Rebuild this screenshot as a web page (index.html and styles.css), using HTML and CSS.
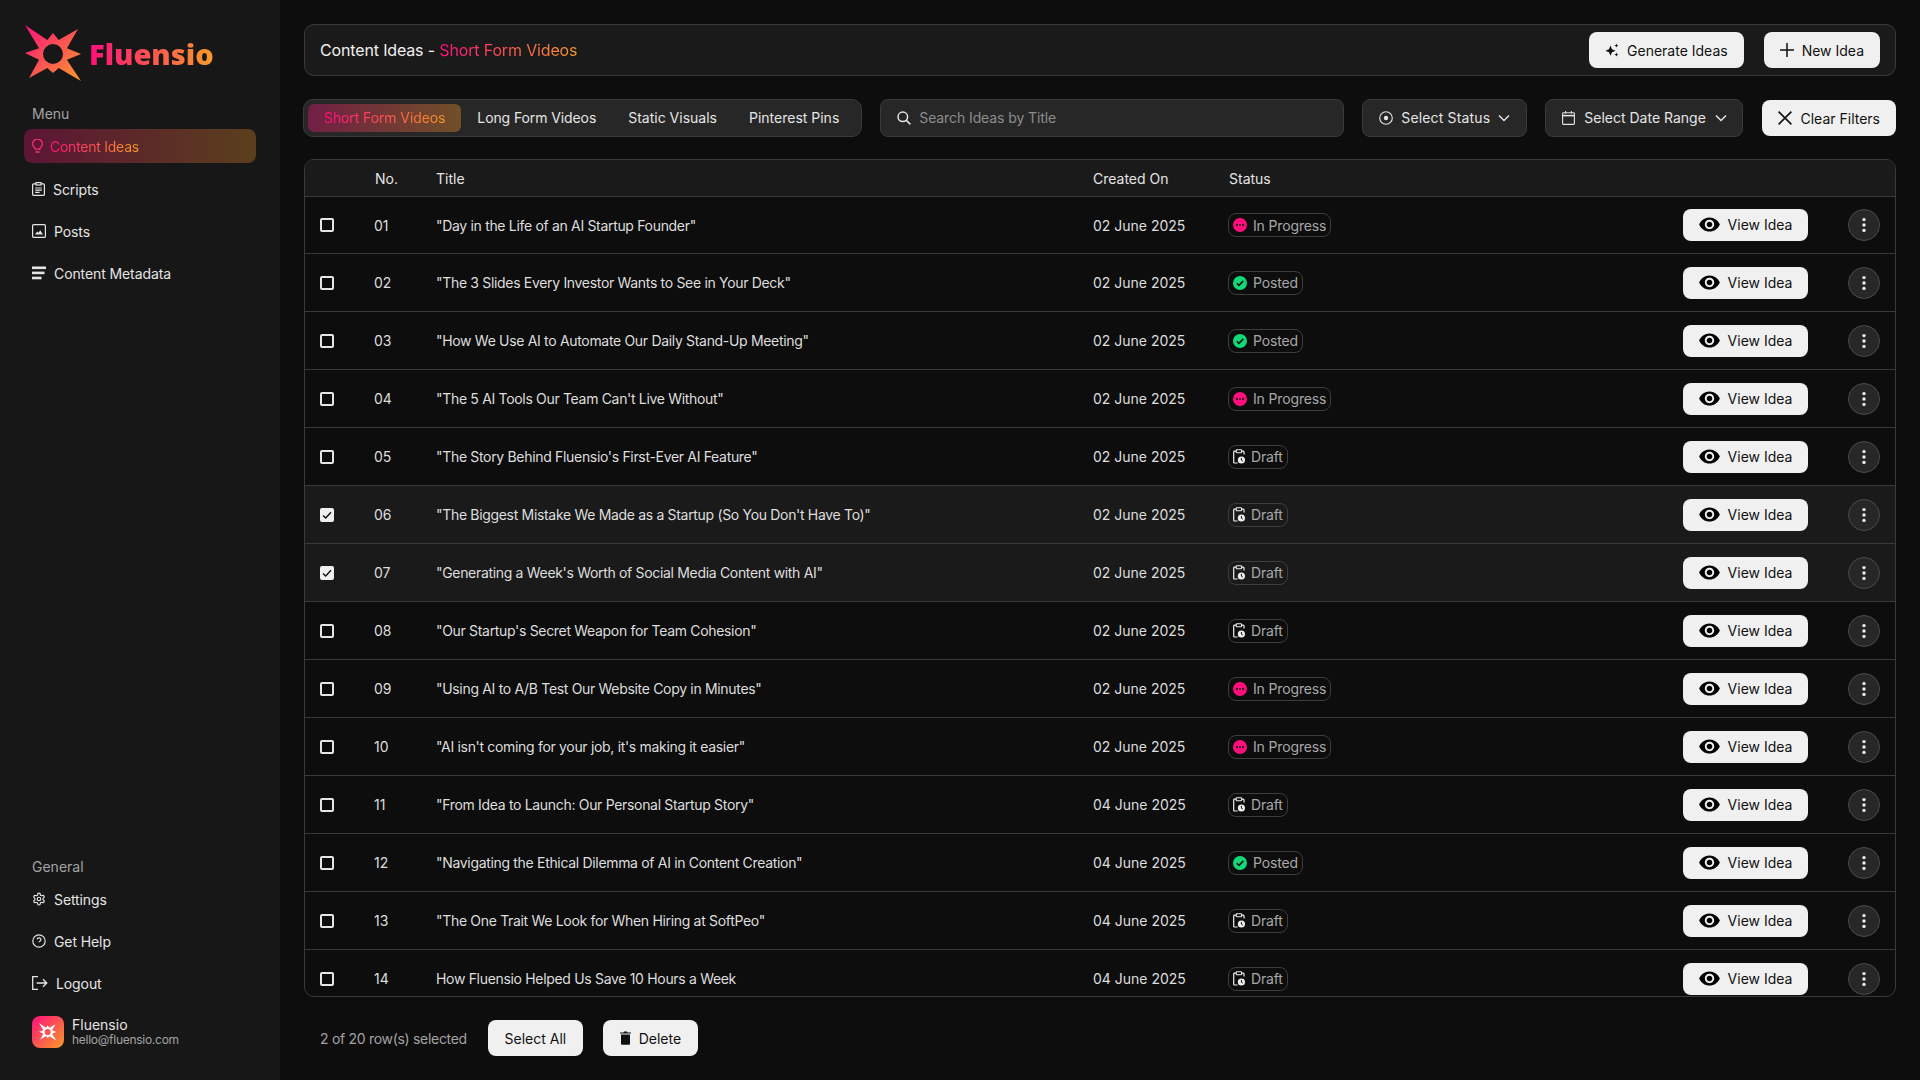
FILE: index.html
```html
<!DOCTYPE html>
<html lang="en">
<head>
<meta charset="utf-8">
<title>Fluensio - Content Ideas</title>
<link rel="stylesheet" href="styles.css">
</head>
<body>
<svg class="defs" aria-hidden="true">
  <defs>
    <linearGradient id="brand" gradientUnits="userSpaceOnUse" x1="25" y1="25" x2="81" y2="81">
      <stop offset="0" stop-color="#ff0f7b"/><stop offset="1" stop-color="#f89b29"/>
    </linearGradient>
    <symbol id="i-star" viewBox="25 25 58 58">
      <path fill-rule="evenodd" d="M53 33 58.7 40.1 78 29 66.9 48.3 81 54 66.9 59.7 81 81 58.7 67.9 53 73 47.3 67.9 29 78 39.1 59.7 25 53 39.1 48.3 25 25 47.3 40.1ZM53 44a10 10 0 1 0 0 20 10 10 0 0 0 0-20Z"/>
    </symbol>
    <symbol id="i-eye" viewBox="1 4 22 16"><path d="M12 4.5C7 4.5 2.73 7.61 1 12c1.73 4.39 6 7.5 11 7.5s9.27-3.11 11-7.5c-1.73-4.39-6-7.5-11-7.5zM12 17c-2.76 0-5-2.24-5-5s2.24-5 5-5 5 2.24 5 5-2.24 5-5 5zm0-8c-1.66 0-3 1.34-3 3s1.34 3 3 3 3-1.34 3-3-1.34-3-3-3z"/></symbol>
    <symbol id="i-dots" viewBox="0 0 16 16"><circle cx="8" cy="2.6" r="1.7"/><circle cx="8" cy="8" r="1.7"/><circle cx="8" cy="13.4" r="1.7"/></symbol>
    <symbol id="i-progress" viewBox="0 0 14 14"><circle cx="7" cy="7" r="7" fill="#ff0f7b"/><circle cx="4" cy="7" r="1" fill="#111"/><circle cx="7" cy="7" r="1" fill="#111"/><circle cx="10" cy="7" r="1" fill="#111"/></symbol>
    <symbol id="i-posted" viewBox="0 0 14 14"><circle cx="7" cy="7" r="7" fill="#12d877"/><path d="M3.8 7.2 6 9.4l4.3-4.5" fill="none" stroke="#111" stroke-width="1.6"/></symbol>
    <symbol id="i-draft" viewBox="0 0 12 15"><path d="M3 2.2H1.4a.7.7 0 0 0-.7.7v10.4a.7.7 0 0 0 .7.7h3.2M9 2.2h1.3a.7.7 0 0 1 .7.7v2.6" fill="none" stroke="#eee" stroke-width="1.2"/><rect x="3.2" y=".8" width="5.4" height="3" rx=".8" fill="none" stroke="#eee" stroke-width="1.1"/><circle cx="8.4" cy="11" r="3.6" fill="#eee"/><path d="M8.4 9v2.2l1.4.8" fill="none" stroke="#111" stroke-width="1"/></symbol>
  </defs>
</svg>

<div class="app">
  <aside class="sidebar">
    <div class="brand">
      <svg class="brand-mark" width="58" height="58"><use href="#i-star" fill="url(#brand)"/></svg>
      <span class="brand-name">Fluensio</span>
    </div>
    <div class="nav-label">Menu</div>
    <nav class="nav">
      <a class="nav-item active">
        <svg width="11" height="14" viewBox="0 0 11 14" fill="none" stroke="#ff2f70" stroke-width="1.2"><path d="M3.4 10.2c0-1.4-2.8-2.4-2.8-5.2a4.9 4.9 0 0 1 9.8 0c0 2.8-2.8 3.8-2.8 5.2Z"/><path d="M3.4 13h4.2" stroke="#ff5060"/></svg>
        <span class="grad-text">Content Ideas</span>
      </a>
      <a class="nav-item">
        <svg width="13" height="14" viewBox="0 0 13 14" fill="none" stroke="#e5e5e5" stroke-width="1.2"><rect x=".6" y="1.8" width="11.8" height="11.6" rx="1"/><rect x="4" y=".6" width="5" height="2.4" fill="#171717"/><path d="M3.2 6h6.6M3.2 8.2h6.6M3.2 10.4h4.4"/></svg>
        <span>Scripts</span>
      </a>
      <a class="nav-item">
        <svg width="14" height="14" viewBox="0 0 14 14"><rect x=".6" y=".6" width="12.8" height="12.8" rx="1" fill="none" stroke="#e5e5e5" stroke-width="1.2"/><path d="M3 10.6 5.2 7.4l1.3 1.3 1.7-2.5 2.8 4.4Z" fill="#e5e5e5"/></svg>
        <span>Posts</span>
      </a>
      <a class="nav-item">
        <svg width="14" height="14" viewBox="0 0 14 14" fill="#e5e5e5"><rect y=".5" width="14" height="2.6"/><rect y="5.6" width="12.5" height="2.6"/><rect y="10.7" width="9.5" height="2.6"/></svg>
        <span>Content Metadata</span>
      </a>
    </nav>
    <div class="side-bottom">
      <div class="nav-label">General</div>
      <nav class="nav">
        <a class="nav-item">
          <svg width="14" height="14" viewBox="0 0 24 24" fill="none" stroke="#e5e5e5" stroke-width="2"><path d="M12.22 2h-.44a2 2 0 0 0-2 2v.18a2 2 0 0 1-1 1.73l-.43.25a2 2 0 0 1-2 0l-.15-.08a2 2 0 0 0-2.73.73l-.22.38a2 2 0 0 0 .73 2.73l.15.1a2 2 0 0 1 1 1.72v.51a2 2 0 0 1-1 1.74l-.15.09a2 2 0 0 0-.73 2.73l.22.38a2 2 0 0 0 2.73.73l.15-.08a2 2 0 0 1 2 0l.43.25a2 2 0 0 1 1 1.73V20a2 2 0 0 0 2 2h.44a2 2 0 0 0 2-2v-.18a2 2 0 0 1 1-1.73l.43-.25a2 2 0 0 1 2 0l.15.08a2 2 0 0 0 2.73-.73l.22-.39a2 2 0 0 0-.73-2.73l-.15-.08a2 2 0 0 1-1-1.74v-.5a2 2 0 0 1 1-1.74l.15-.09a2 2 0 0 0 .73-2.73l-.22-.38a2 2 0 0 0-2.73-.73l-.15.08a2 2 0 0 1-2 0l-.43-.25a2 2 0 0 1-1-1.73V4a2 2 0 0 0-2-2z"/><circle cx="12" cy="12" r="3"/></svg>
          <span>Settings</span>
        </a>
        <a class="nav-item">
          <svg width="14" height="14" viewBox="0 0 24 24" fill="none" stroke="#e5e5e5" stroke-width="2"><circle cx="12" cy="12" r="10.6"/><path d="M8.6 9a3.5 3.5 0 0 1 6.8 1c0 2.2-3.4 2.6-3.4 4.2"/><path d="M12 17.5v.2"/></svg>
          <span>Get Help</span>
        </a>
        <a class="nav-item">
          <svg width="16" height="14" viewBox="0 0 16 14" fill="none" stroke="#e5e5e5" stroke-width="1.3"><path d="M6 .7H.7v12.6H6"/><path d="M4.6 7h10.2M11 3.2 14.8 7 11 10.8"/></svg>
          <span>Logout</span>
        </a>
      </nav>
      <div class="user">
        <div class="avatar"><svg width="18" height="18"><use href="#i-star" fill="#fff"/></svg></div>
        <div class="user-info">
          <div class="user-name">Fluensio</div>
          <div class="user-mail">hello@fluensio.com</div>
        </div>
      </div>
    </div>
  </aside>

  <main class="main">
    <header class="topbar">
      <h1 class="page-title">Content Ideas - <span class="grad-text">Short Form Videos</span></h1>
      <div class="top-actions">
        <button class="btn"><svg width="14" height="14" viewBox="0 0 14 14" fill="#111"><path d="M5.5 2.6 7 6.2l3.6 1.5L7 9.2l-1.5 3.6L4 9.2.4 7.7 4 6.2ZM11.4.6l.6 1.4 1.4.6-1.4.6-.6 1.4-.6-1.4-1.4-.6 1.4-.6ZM11.4 9.6l.6 1.4 1.4.6-1.4.6-.6 1.4-.6-1.4-1.4-.6 1.4-.6Z"/></svg>Generate Ideas</button>
        <button class="btn"><svg width="14" height="14" viewBox="0 0 14 14" fill="none" stroke="#111" stroke-width="1.5"><path d="M7 0v14M0 7h14"/></svg>New Idea</button>
      </div>
    </header>

    <section class="filters">
      <div class="tabs">
        <button class="tab active"><span class="grad-text">Short Form Videos</span></button>
        <button class="tab">Long Form Videos</button>
        <button class="tab">Static Visuals</button>
        <button class="tab">Pinterest Pins</button>
      </div>
      <div class="search">
        <svg width="14" height="14" viewBox="0 0 14 14" fill="none" stroke="#e5e5e5" stroke-width="1.5"><circle cx="5.8" cy="5.8" r="4.8"/><path d="m9.4 9.4 4 4"/></svg>
        <span>Search Ideas by Title</span>
      </div>
      <button class="select select-status">
        <svg width="14" height="14" viewBox="0 0 14 14" fill="none" stroke="#e5e5e5" stroke-width="1.1"><circle cx="7" cy="7" r="6.3"/><circle cx="7" cy="7" r="2.2" fill="#e5e5e5" stroke="none"/></svg>
        <span>Select Status</span>
        <svg class="chev" width="12" height="8" viewBox="0 0 12 8" fill="none" stroke="#e5e5e5" stroke-width="1.5"><path d="m1 1.5 5 5 5-5"/></svg>
      </button>
      <button class="select select-date">
        <svg width="13" height="14" viewBox="0 0 13 14" fill="none" stroke="#e5e5e5" stroke-width="1.1"><rect x=".6" y="1.8" width="11.8" height="11.6" rx=".8"/><path d="M.6 4.6h11.8" stroke-width="1.6"/><path d="M3.6 0v2.4M9.4 0v2.4"/></svg>
        <span>Select Date Range</span>
        <svg class="chev" width="12" height="8" viewBox="0 0 12 8" fill="none" stroke="#e5e5e5" stroke-width="1.5"><path d="m1 1.5 5 5 5-5"/></svg>
      </button>
      <button class="btn btn-clear"><svg width="14" height="14" viewBox="0 0 14 14" fill="none" stroke="#111" stroke-width="1.6"><path d="m.6.6 12.8 12.8M13.4.6.6 13.4"/></svg>Clear Filters</button>
    </section>

    <section class="table">
      <div class="row head">
        <span></span><span>No.</span><span>Title</span><span>Created On</span><span>Status</span><span></span>
      </div>
      <div class="rows">
        <div class="row"><i class="check"></i><span class="num">01</span><span class="ttl">"Day in the Life of an AI Startup Founder"</span><span>02 June 2025</span><span><b class="pill"><svg width="14" height="14"><use href="#i-progress"/></svg>In Progress</b></span><span class="acts"><button class="btn btn-view"><svg width="21" height="15"><use href="#i-eye"/></svg>View Idea</button><button class="kebab" aria-label="More"><svg width="16" height="16"><use href="#i-dots"/></svg></button></span></div>
        <div class="row"><i class="check"></i><span class="num">02</span><span class="ttl">"The 3 Slides Every Investor Wants to See in Your Deck"</span><span>02 June 2025</span><span><b class="pill"><svg width="14" height="14"><use href="#i-posted"/></svg>Posted</b></span><span class="acts"><button class="btn btn-view"><svg width="21" height="15"><use href="#i-eye"/></svg>View Idea</button><button class="kebab" aria-label="More"><svg width="16" height="16"><use href="#i-dots"/></svg></button></span></div>
        <div class="row"><i class="check"></i><span class="num">03</span><span class="ttl">"How We Use AI to Automate Our Daily Stand-Up Meeting"</span><span>02 June 2025</span><span><b class="pill"><svg width="14" height="14"><use href="#i-posted"/></svg>Posted</b></span><span class="acts"><button class="btn btn-view"><svg width="21" height="15"><use href="#i-eye"/></svg>View Idea</button><button class="kebab" aria-label="More"><svg width="16" height="16"><use href="#i-dots"/></svg></button></span></div>
        <div class="row"><i class="check"></i><span class="num">04</span><span class="ttl">"The 5 AI Tools Our Team Can't Live Without"</span><span>02 June 2025</span><span><b class="pill"><svg width="14" height="14"><use href="#i-progress"/></svg>In Progress</b></span><span class="acts"><button class="btn btn-view"><svg width="21" height="15"><use href="#i-eye"/></svg>View Idea</button><button class="kebab" aria-label="More"><svg width="16" height="16"><use href="#i-dots"/></svg></button></span></div>
        <div class="row"><i class="check"></i><span class="num">05</span><span class="ttl">"The Story Behind Fluensio's First-Ever AI Feature"</span><span>02 June 2025</span><span><b class="pill draft"><svg width="12" height="15"><use href="#i-draft"/></svg>Draft</b></span><span class="acts"><button class="btn btn-view"><svg width="21" height="15"><use href="#i-eye"/></svg>View Idea</button><button class="kebab" aria-label="More"><svg width="16" height="16"><use href="#i-dots"/></svg></button></span></div>
        <div class="row selected"><i class="check on"><svg width="14" height="14" viewBox="0 0 14 14" fill="none" stroke="#111" stroke-width="1.4"><path d="m3 7.4 2.7 2.6L11 4.2"/></svg></i><span class="num">06</span><span class="ttl">"The Biggest Mistake We Made as a Startup (So You Don't Have To)"</span><span>02 June 2025</span><span><b class="pill draft"><svg width="12" height="15"><use href="#i-draft"/></svg>Draft</b></span><span class="acts"><button class="btn btn-view"><svg width="21" height="15"><use href="#i-eye"/></svg>View Idea</button><button class="kebab" aria-label="More"><svg width="16" height="16"><use href="#i-dots"/></svg></button></span></div>
        <div class="row selected"><i class="check on"><svg width="14" height="14" viewBox="0 0 14 14" fill="none" stroke="#111" stroke-width="1.4"><path d="m3 7.4 2.7 2.6L11 4.2"/></svg></i><span class="num">07</span><span class="ttl">"Generating a Week's Worth of Social Media Content with AI"</span><span>02 June 2025</span><span><b class="pill draft"><svg width="12" height="15"><use href="#i-draft"/></svg>Draft</b></span><span class="acts"><button class="btn btn-view"><svg width="21" height="15"><use href="#i-eye"/></svg>View Idea</button><button class="kebab" aria-label="More"><svg width="16" height="16"><use href="#i-dots"/></svg></button></span></div>
        <div class="row"><i class="check"></i><span class="num">08</span><span class="ttl">"Our Startup's Secret Weapon for Team Cohesion"</span><span>02 June 2025</span><span><b class="pill draft"><svg width="12" height="15"><use href="#i-draft"/></svg>Draft</b></span><span class="acts"><button class="btn btn-view"><svg width="21" height="15"><use href="#i-eye"/></svg>View Idea</button><button class="kebab" aria-label="More"><svg width="16" height="16"><use href="#i-dots"/></svg></button></span></div>
        <div class="row"><i class="check"></i><span class="num">09</span><span class="ttl">"Using AI to A/B Test Our Website Copy in Minutes"</span><span>02 June 2025</span><span><b class="pill"><svg width="14" height="14"><use href="#i-progress"/></svg>In Progress</b></span><span class="acts"><button class="btn btn-view"><svg width="21" height="15"><use href="#i-eye"/></svg>View Idea</button><button class="kebab" aria-label="More"><svg width="16" height="16"><use href="#i-dots"/></svg></button></span></div>
        <div class="row"><i class="check"></i><span class="num">10</span><span class="ttl">"AI isn't coming for your job, it's making it easier"</span><span>02 June 2025</span><span><b class="pill"><svg width="14" height="14"><use href="#i-progress"/></svg>In Progress</b></span><span class="acts"><button class="btn btn-view"><svg width="21" height="15"><use href="#i-eye"/></svg>View Idea</button><button class="kebab" aria-label="More"><svg width="16" height="16"><use href="#i-dots"/></svg></button></span></div>
        <div class="row"><i class="check"></i><span class="num">11</span><span class="ttl">"From Idea to Launch: Our Personal Startup Story"</span><span>04 June 2025</span><span><b class="pill draft"><svg width="12" height="15"><use href="#i-draft"/></svg>Draft</b></span><span class="acts"><button class="btn btn-view"><svg width="21" height="15"><use href="#i-eye"/></svg>View Idea</button><button class="kebab" aria-label="More"><svg width="16" height="16"><use href="#i-dots"/></svg></button></span></div>
        <div class="row"><i class="check"></i><span class="num">12</span><span class="ttl">"Navigating the Ethical Dilemma of AI in Content Creation"</span><span>04 June 2025</span><span><b class="pill"><svg width="14" height="14"><use href="#i-posted"/></svg>Posted</b></span><span class="acts"><button class="btn btn-view"><svg width="21" height="15"><use href="#i-eye"/></svg>View Idea</button><button class="kebab" aria-label="More"><svg width="16" height="16"><use href="#i-dots"/></svg></button></span></div>
        <div class="row"><i class="check"></i><span class="num">13</span><span class="ttl">"The One Trait We Look for When Hiring at SoftPeo"</span><span>04 June 2025</span><span><b class="pill draft"><svg width="12" height="15"><use href="#i-draft"/></svg>Draft</b></span><span class="acts"><button class="btn btn-view"><svg width="21" height="15"><use href="#i-eye"/></svg>View Idea</button><button class="kebab" aria-label="More"><svg width="16" height="16"><use href="#i-dots"/></svg></button></span></div>
        <div class="row"><i class="check"></i><span class="num">14</span><span class="ttl">How Fluensio Helped Us Save 10 Hours a Week</span><span>04 June 2025</span><span><b class="pill draft"><svg width="12" height="15"><use href="#i-draft"/></svg>Draft</b></span><span class="acts"><button class="btn btn-view"><svg width="21" height="15"><use href="#i-eye"/></svg>View Idea</button><button class="kebab" aria-label="More"><svg width="16" height="16"><use href="#i-dots"/></svg></button></span></div>
      </div>
    </section>

    <footer class="footer">
      <span class="sel-count">2 of 20 row(s) selected</span>
      <button class="btn btn-foot">Select All</button>
      <button class="btn btn-foot"><svg width="11" height="14" viewBox="0 0 11 14" fill="#111"><path d="M1 3.4h9v9.4a1 1 0 0 1-1 1H2a1 1 0 0 1-1-1Z"/><path d="M0 1.6h3.4L4 .6h3l.6 1h3.4v1H0Z"/></svg>Delete</button>
    </footer>
  </main>
</div>
</body>
</html>
```

FILE: styles.css
```css
* { box-sizing: border-box; margin: 0; padding: 0; }
html, body { height: 100%; overflow: hidden; }
body {
  background: #0d0d0d;
  color: #e5e5e5;
  font-family: "Inter", "Liberation Sans", sans-serif;
  font-size: 14px;
  line-height: 17px;
}
button { font: inherit; border: 0; cursor: pointer; color: inherit; background: none; }
.defs { position: absolute; width: 0; height: 0; }
svg { display: block; flex: none; }

.app { display: flex; height: 100vh; }

.grad-text {
  background: linear-gradient(90deg, #ff0f7b, #f89b29);
  -webkit-background-clip: text;
  background-clip: text;
  color: transparent;
}

/* Sidebar */
.sidebar {
  width: 280px;
  flex: none;
  background: #171717;
  display: flex;
  flex-direction: column;
  padding: 25px 24px 32px;
}
.brand { display: flex; align-items: center; gap: 6px; height: 58px; margin-left: 1px; margin-bottom: 22px; }
.brand-name {
  font-family: "Open Sans", sans-serif;
  font-weight: 800;
  font-size: 29px;
  line-height: 36px;
  background: linear-gradient(90deg, #ff0f7b, #f89b29);
  -webkit-background-clip: text;
  background-clip: text;
  color: transparent;
}
.nav-label { color: #a3a3a3; padding-left: 8px; height: 18px; margin-bottom: 6px; }
.nav { display: flex; flex-direction: column; gap: 8px; }
.nav-item {
  display: flex;
  align-items: center;
  gap: 8px;
  height: 34px;
  padding: 0 8px;
  border-radius: 8px;
  color: #e5e5e5;
  letter-spacing: -.1px;
}
.nav-item.active {
  margin-bottom: 1px;
  gap: 7px;
  letter-spacing: -.25px;
  background: linear-gradient(90deg, rgba(255,15,123,.3), rgba(248,155,41,.3));
}
.side-bottom { margin-top: auto; }
.user { display: flex; align-items: center; gap: 8px; margin: 16px 0 0 8px; }
.avatar {
  width: 32px; height: 32px;
  border-radius: 8px;
  background: linear-gradient(135deg, #ff0f7b, #f89b29);
  display: flex; align-items: center; justify-content: center;
}
.user-name { line-height: 15px; color: #e5e5e5; }
.user-mail { font-size: 12px; line-height: 15px; color: #a3a3a3; letter-spacing: -.27px; }

/* Main */
.main {
  flex: 1;
  min-width: 0;
  display: flex;
  flex-direction: column;
  padding: 24px 24px 24px;
}
.topbar {
  height: 52px;
  flex: none;
  display: flex;
  align-items: center;
  justify-content: space-between;
  background: #1a1a1a;
  border: 1px solid #3a3a3a;
  border-radius: 10px;
  padding: 0 15px;
}
.page-title { font-size: 16px; line-height: 20px; font-weight: 400; color: #f0f0f0; letter-spacing: -.15px; }
.top-actions { display: flex; gap: 20px; }
.btn {
  display: inline-flex;
  align-items: center;
  justify-content: center;
  gap: 8px;
  height: 36px;
  padding: 0 16px;
  background: #f0f0f0;
  color: #111;
  border-radius: 8px;
  white-space: nowrap;
}

/* Filters */
.filters { display: flex; align-items: center; margin-top: 23px; height: 38px; flex: none; }
.tabs {
  display: flex;
  align-items: center;
  height: 38px;
  background: #272727;
  border: 1px solid #3a3a3a;
  border-radius: 10px;
  padding: 0 6px 0 4px;
  margin-left: -1px;
  margin-right: 18px;
}
.tab { height: 28px; padding: 0 16px 1px; border-radius: 6px; color: #e5e5e5; white-space: nowrap; }
.tab:nth-child(-n+2) { letter-spacing: -.1px; }
.tab.active { background: linear-gradient(90deg, rgba(255,15,123,.35), rgba(248,155,41,.35)); }
.search {
  width: 464px;
  height: 38px;
  display: flex;
  align-items: center;
  gap: 8px;
  padding: 0 16px 1px;
  color: #8c8c8c;
  background: #272727;
  border: 1px solid #3a3a3a;
  border-radius: 8px;
  margin-right: 18px;
  letter-spacing: -.1px;
}
.select {
  height: 38px;
  display: flex;
  align-items: center;
  gap: 8px;
  padding: 0 16px 1px;
  background: #272727;
  border: 1px solid #3a3a3a;
  border-radius: 8px;
  color: #e5e5e5;
  white-space: nowrap;
}
.select-status { width: 165px; margin-right: 18px; letter-spacing: .15px; }
.select-date { width: 198px; margin-right: 19px; gap: 9px; }
.btn-clear { margin-left: auto; }

/* Table */
.table {
  flex: 1;
  min-height: 0;
  margin-top: 22px;
  border: 1px solid #3a3a3a;
  border-radius: 10px;
  overflow: hidden;
}
.row {
  display: grid;
  grid-template-columns: 70px 61px 657px 136px 150px 1fr;
  align-items: center;
  height: 58px;
  border-top: 1px solid #3a3a3a;
  color: #dedede;
}
.rows .row:first-child { height: 57px; }
.row.head { height: 36px; border-top: 0; background: #1a1a1a; color: #e5e5e5; }
.row.selected { background: #1a1a1a; }
.num { margin-left: -1px; }
.ttl { letter-spacing: -.32px; }
.check {
  display: block;
  width: 14px; height: 14px;
  margin-left: 15px;
  border: 2px solid #e5e5e5;
  border-radius: 2px;
}
.check.on { background: #f0f0f0; border: 0; }
.pill {
  display: inline-flex;
  align-items: center;
  gap: 6px;
  height: 24px;
  padding: 0 4px;
  font-weight: 400;
  color: #a8a8a8;
  border: 1px solid #3d3d3d;
  border-radius: 8px;
  margin-left: -1px;
  vertical-align: middle;
  letter-spacing: -.15px;
}
.acts { display: flex; justify-content: flex-end; align-items: center; gap: 40px; padding-right: 15px; }
.btn-view { height: 32px; width: 125px; padding-bottom: 1px; }
.kebab {
  width: 32px; height: 32px;
  display: flex; align-items: center; justify-content: center;
  border-radius: 50%;
  background: #272727;
  border: 1px solid #4a4a4a;
  fill: #f0f0f0;
}

/* Footer */
.footer { display: flex; align-items: center; height: 36px; flex: none; margin-top: 23px; padding-left: 16px; }
.sel-count { color: #a3a3a3; margin-right: 21px; letter-spacing: -.3px; }
.btn-foot { width: 95px; padding: 0; }
.btn-foot + .btn-foot { margin-left: 20px; }
```
